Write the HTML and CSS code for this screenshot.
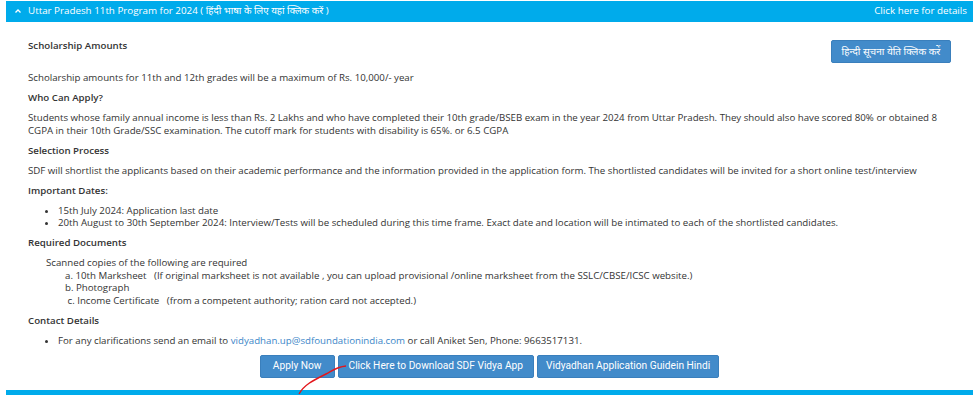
FILE: index.html
```html
<!DOCTYPE html>
<html lang="en">
<head>
  <meta charset="UTF-8">
  <title>Uttar Pradesh 11th Program</title>
  <link rel="stylesheet" href="styles.css">
</head>
<body>

<div class="panel">
  <div class="panel-heading">
    <span class="panel-title">
      <svg class="caret" width="6" height="4" viewBox="0 0 6 4"><path d="M0.5 3.5 L3 1 L5.5 3.5" fill="none" stroke="#fff" stroke-width="1.3"/></svg>
      Uttar Pradesh 11th Program for 2024 ( हिंदी भाषा के लिए यहां क्लिक करें )
    </span>
    <span class="panel-link">Click here for details</span>
  </div>

  <div class="panel-body">
    <div class="top-row">
      <h4>Scholarship Amounts</h4>
      <a class="btn btn-hindi" href="#">हिन्दी सूचना येति क्लिक करें</a>
    </div>
    <p>Scholarship amounts for 11th and 12th grades will be a maximum of Rs. 10,000/- year</p>

    <h4>Who Can Apply?</h4>
    <p>Students whose family annual income is less than Rs. 2 Lakhs and who have completed their 10th grade/BSEB exam in the year 2024 from Uttar Pradesh. They should also have scored 80% or obtained 8 CGPA in their 10th Grade/SSC examination. The cutoff mark for students with disability is 65%. or 6.5 CGPA</p>

    <h4>Selection Process</h4>
    <p>SDF will shortlist the applicants based on their academic performance and the information provided in the application form. The shortlisted candidates will be invited for a short online test/interview</p>

    <h4>Important Dates:</h4>
    <ul>
      <li>15th July 2024: Application last date</li>
      <li>20th August to 30th September 2024: Interview/Tests will be scheduled during this time frame. Exact date and location will be intimated to each of the shortlisted candidates.</li>
    </ul>

    <h4>Required Documents</h4>
    <div class="docs">
      <div>Scanned copies of the following are required</div>
      <div class="doc-item">a. 10th Marksheet &nbsp; (If original marksheet is not available , you can upload provisional /online marksheet from the SSLC/CBSE/ICSC website.)</div>
      <div class="doc-item">b. Photograph</div>
      <div class="doc-item">&nbsp;c. Income Certificate &nbsp; (from a competent authority; ration card not accepted.)</div>
    </div>

    <h4>Contact Details</h4>
    <ul>
      <li>For any clarifications send an email to <a class="mail" href="#">vidyadhan.up@sdfoundationindia.com</a> or call Aniket Sen, Phone: 9663517131.</li>
    </ul>

    <div class="actions">
      <a class="btn btn-apply" href="#">Apply Now</a>
      <a class="btn" href="#">Click Here to Download SDF Vidya App</a>
      <a class="btn btn-guide" href="#">Vidyadhan Application Guidein Hindi</a>
    </div>
  </div>
</div>

<div class="panel-next"></div>

<!-- red pen mark drawn over the buttons -->
<svg class="pen-mark" width="60" height="40" viewBox="0 0 60 40">
  <path d="M9 39 C 14 30, 22 26, 36 19 C 42 16, 46 12, 56 11" fill="none" stroke="#e3161b" stroke-width="1.4"/>
</svg>

</body>
</html>
```

FILE: styles.css
```css
* { box-sizing: border-box; }

body {
  margin: 0;
  background: #fff;
  font-family: 'Open Sans', 'Noto Sans', sans-serif;
  font-size: 9.7px;
  line-height: 12.5px;
  color: #333;
  position: relative;
  height: 395px;
  overflow: hidden;
}

.panel {
  margin: 1px 6px 0 6px;
}

.panel-heading {
  height: 21px;
  background: #00abeb;
  color: #fff;
  display: flex;
  align-items: center;
  justify-content: space-between;
  padding: 0 6px 0 9px;
  font-size: 9.8px;
}

.panel-title {
  display: flex;
  align-items: center;
  gap: 7px;
}

.caret {
  margin-top: -1px;
}

.panel-body {
  padding: 18px 22px 0 22px;
}

.top-row {
  display: flex;
  justify-content: space-between;
  align-items: flex-start;
  margin-bottom: 9px;
}

h4 {
  margin: 0 0 7.5px;
  font-size: 9.7px;
  font-weight: 600;
}

.top-row h4 {
  margin: 0;
}

p {
  margin: 0 0 7.5px;
}

ul {
  margin: 0 0 7.5px;
  padding-left: 30px;
}

.docs {
  margin: 0 0 7.5px;
  padding-left: 18px;
}

.doc-item {
  padding-left: 19px;
}

a.mail {
  color: #3b86c8;
  text-decoration: none;
}

.btn {
  display: inline-flex;
  align-items: center;
  justify-content: center;
  height: 23px;
  padding: 0 10px;
  background: #428bca;
  border: 1px solid #3a7fbc;
  border-radius: 2px;
  color: #fff;
  text-decoration: none;
  white-space: nowrap;
  font-family: 'Liberation Sans Narrow', 'Roboto', sans-serif;
  font-size: 10.2px;
}

.btn-apply {
  padding: 0 12px;
}

.btn-guide {
  padding: 0 8px;
}

.btn-hindi {
  width: 120px;
  padding: 0;
  font-family: 'Open Sans', 'Noto Sans', sans-serif;
  font-size: 10px;
}

.actions {
  display: flex;
  justify-content: center;
  gap: 3px;
  margin-top: 8px;
}

.panel-next {
  margin: 12px 6px 0 6px;
  height: 6px;
  background: #00abeb;
}

.pen-mark {
  position: absolute;
  left: 290px;
  top: 355px;
}
```
